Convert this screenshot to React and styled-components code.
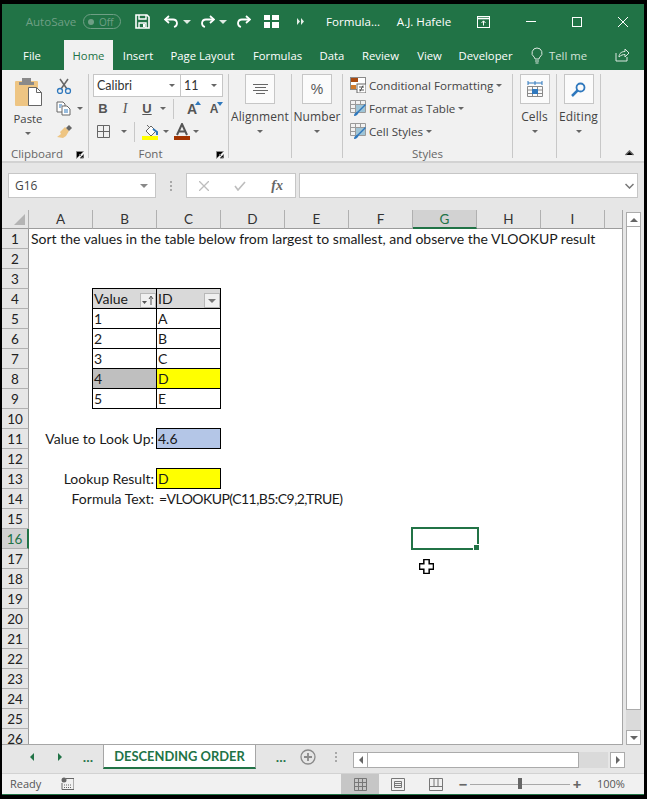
import React from "react";
import styled, { createGlobalStyle } from "styled-components";

const Global = createGlobalStyle`
  html, body { margin: 0; padding: 0; background: #000; }
  * { box-sizing: border-box; }
`;
const UI = `"Open Sans", "Noto Sans", sans-serif`;
const CAL = `Lato, "Open Sans", sans-serif`;
const GREEN = "#217346";

const Window = styled.div`
  width: 647px; height: 799px; background: #000;
  padding: 4px 3px 4px 2px; display: flex; flex-direction: column; overflow: hidden;
  font-family: ${UI};
`;
const Frame = styled.div`
  flex: 1; display: flex; flex-direction: column; background: #e6e6e6;
  min-height: 0; border-bottom: 1px solid ${GREEN};
`;
const TitleBar = styled.div`
  height: 36px; background: ${GREEN}; display: flex; align-items: center; color: #fff; font-size: 11.5px;
  flex: none; padding-bottom: 1px;
`;
const Slot = styled.div`
  flex: none; display: flex; align-items: center; justify-content: center;
  width: ${p => p.$w}px; height: 20px; margin-left: ${p => p.$ml || 0}px;
  color: ${p => p.$color || "#fff"};
  font-size: 11.6px; white-space: nowrap; gap: 1px;
`;
const Toggle = styled.div`
  width: 38px; height: 15px; border: 1px solid #6f9f85; border-radius: 8px; margin-left: 7px;
  display: flex; align-items: center; color: #6f9f85; font-size: 10px; padding-left: 4px; gap: 5px; flex: none;
`;
const Knob = styled.span`width: 6px; height: 6px; border-radius: 50%; background: #6f9f85;`;
const TabRow = styled.div`
  height: 30px; background: ${GREEN}; display: flex; align-items: stretch; color: #fff; flex: none; font-size: 11.3px;
`;
const Tab = styled.div`
  flex: none; width: ${p => p.$w}px; margin-left: ${p => p.$ml || 0}px; display: flex; align-items: center; justify-content: center;
  white-space: nowrap;
  background: ${p => (p.$active ? "#f1f1f1" : "transparent")};
  color: ${p => (p.$active ? GREEN : p.$dim ? "#d4e3da" : "#fff")};
`;
const Ribbon = styled.div`
  height: 93px; background: #f1f1f1; border-bottom: 2px solid #d2d2d2; display: flex; flex: none; padding-top: 4px; position: relative;
`;
const Group = styled.div`
  width: ${p => p.$w}px; flex: none; height: 84px; position: relative; display: flex; flex-direction: column;
  border-right: 1px solid #c8c8c8;
`;
const GroupBody = styled.div`
  flex: none; height: 74px; display: flex;
  flex-direction: ${p => (p.$col ? "column" : "row")};
`;
const GroupLabel = styled.div`
  height: 14px; flex: none; text-align: center; font-size: 11.5px; color: #666; line-height: 12px;
  padding-right: ${p => p.$pr || 0}px;
`;
const Launcher = styled.svg`position: absolute; right: 4px; bottom: -1px;`;
const PasteCol = styled.div`
  width: 48px; margin-left: 2px; display: flex; flex-direction: column; align-items: center; font-size: 11.3px; color: #444; padding-top: 3px;
`;
const PasteLabel = styled.div`margin-top: 3px; line-height: 16px;`;
const ClipTools = styled.div`display: flex; flex-direction: column; gap: 6px; padding: 3px 0 0 4px;`;
const ToolRow = styled.div`display: flex; align-items: center; gap: 5px; height: 17px;`;
const Caret = styled.span`
  display: inline-block; width: 0; height: 0; flex: none;
  border-left: 3px solid transparent; border-right: 3px solid transparent;
  border-top: 3px solid ${p => p.$c || "#666"};
  margin-left: ${p => p.$ml || 0}px;
`;
const Combo = styled.div`
  width: ${p => p.$w}px; height: 23px; background: #fff; border: 1px solid #c6c6c6; margin-left: ${p => p.$ml || 0}px;
  display: flex; align-items: center; justify-content: space-between; padding: 0 5px 0 3px;
  font-family: ${CAL}; font-size: 12.5px; color: #333; flex: none;
`;
const FontRow = styled.div`
  display: flex; align-items: center; padding-left: ${p => p.$pl || 0}px; height: 23px;
  font-size: 14px; color: #555; flex: none;
`;
const Fmt = styled.span`
  width: ${p => p.$w || 22}px; text-align: center; font-family: ${p => (p.$serif ? `"Liberation Serif", serif` : `"Liberation Sans", sans-serif`)};
  font-weight: ${p => (p.$b ? 700 : 400)}; font-style: ${p => (p.$i ? "italic" : "normal")};
  text-decoration: ${p => (p.$u ? "underline" : "none")}; flex: none; font-size: ${p => p.$fs || 13}px; position: relative;
`;
const Sep = styled.span`width: 1px; height: 20px; background: #c8c8c8; margin: 0 ${p => p.$m || 8}px; flex: none;`;
const Gap = styled.span`width: ${p => p.$w}px; flex: none;`;
const BigCol = styled.div`
  flex: 1; display: flex; flex-direction: column; align-items: center; font-size: 12px; color: #444;
`;
const BigBtn = styled.div`
  width: 30px; height: 30px; background: #fbfbfb; border: 1px solid #c6c6c6; display: flex; align-items: center; justify-content: center;
  font-size: 14px; color: #555; font-family: "Liberation Sans", sans-serif; margin-bottom: 4px; flex: none;
`;
const BigLabel = styled.div`line-height: 17px; white-space: nowrap; letter-spacing: 0.1px;`;
const CaretBox = styled.div`height: 13px; display: flex; align-items: center;`;
const StyleRow = styled.div`
  display: flex; align-items: center; height: 23px; padding: 0 0 1px 7px; gap: 3px; font-size: 11.6px; color: #444; white-space: nowrap; flex: none;
`;
const Collapse = styled.svg`position: absolute; right: 10px; bottom: 5px;`;

const FormulaBar = styled.div`
  height: 47px; flex: none; display: flex; align-items: flex-start; padding: 10px 6px 0 6px; background: #e6e6e6;
`;
const NameBox = styled.div`
  width: 148px; height: 25px; background: #fff; border: 1px solid #c6c6c6; display: flex; align-items: center;
  justify-content: space-between; padding: 0 7px 0 6px; font-size: 12px; color: #444; flex: none;
`;
const Dots = styled.div`
  width: ${p => p.$w || 30}px; height: ${p => p.$h || 25}px; margin-left: ${p => p.$ml || 0}px;
  display: flex; flex-direction: column; gap: 2px; align-items: center; justify-content: center; flex: none;
`;
const Dot = styled.span`width: 2px; height: 2px; background: #a8a8a8;`;
const FxBox = styled.div`
  width: 110px; height: 25px; background: #fff; border: 1px solid #c6c6c6; display: flex; align-items: center;
  justify-content: space-between; padding: 0 12px; flex: none; color: #777;
`;
const Fx = styled.span`font-family: "Liberation Serif", serif; font-style: italic; font-size: 14px; font-weight: 700; color: #666;`;
const Input = styled.div`
  flex: 1; height: 25px; margin-left: 3px; background: #fff; border: 1px solid #c6c6c6; display: flex; align-items: center;
  justify-content: flex-end; padding-right: 3px;
`;

const SheetArea = styled.div`
  height: 535px; flex: none; display: flex; background: #e6e6e6;
`;
const Sheet = styled.div`
  width: 621px; height: 535px; flex: none; overflow: hidden; background: #fff;
  display: grid; grid-template-columns: 27px repeat(9, 64px) 18px; grid-template-rows: 19px repeat(26, 20px);
  border-right: 1px solid #a6a6a6; border-bottom: 1px solid #a6a6a6; position: relative;
  font-family: ${CAL};
`;
const Corner = styled.div`
  grid-row: 1; grid-column: 1; background: #e6e6e6; border-right: 1px solid #b0b0b0; border-bottom: 1px solid #9c9c9c;
  display: flex; align-items: flex-end; justify-content: flex-end; padding: 0 3px 3px 0;
`;
const ColHead = styled.div`
  grid-row: 1; grid-column: ${p => p.$i + 2}; background: ${p => (p.$sel ? "#d2d2d2" : "#e6e6e6")};
  border-right: 1px solid #b0b0b0; border-bottom: ${p => (p.$sel ? `2px solid ${GREEN}` : "1px solid #9c9c9c")};
  color: ${p => (p.$sel ? GREEN : "#333")}; font-size: 13.5px; display: flex; align-items: center; justify-content: center;
`;
const RowHead = styled.div`
  grid-column: 1; grid-row: ${p => p.$r + 1}; background: ${p => (p.$sel ? "#d2d2d2" : "#e6e6e6")};
  border-right: ${p => (p.$sel ? `2px solid ${GREEN}` : "1px solid #9c9c9c")}; border-bottom: 1px solid #b0b0b0;
  color: ${p => (p.$sel ? GREEN : "#222")}; font-size: 13.5px; display: flex; align-items: center; justify-content: center;
`;
const Cell = styled.div`
  grid-row: ${p => p.$r + 1}; grid-column: ${p => p.$c + 1};
  background: ${p => p.$bg || "transparent"};
  border: ${p => (p.$box ? "1px solid #000" : "none")};
  margin: ${p => (p.$box ? "-1px 0 0 -1px" : "0")};
  padding: ${p => (p.$box ? "0 0 0 1px" : p.$right ? "0 3px 2px 0" : "0 0 2px 2px")};
  display: flex; align-items: center; justify-content: ${p => (p.$right ? "flex-end" : "space-between")};
  font-size: 14px; letter-spacing: ${p => p.$ls || 0}px; color: #1a1a1a; white-space: nowrap; position: relative; min-width: 0;
`;
const FilterBtn = styled.span`
  width: 16px; height: 15px; background: #f0f0f0; border: 1px solid #b8b8b8; flex: none; display: flex; align-items: center; justify-content: center; gap: 1px;
  margin-left: auto; align-self: flex-end;
`;
const Selection = styled.div`
  position: absolute; inset: -2px -2px -1px -2px; border: 2px solid ${GREEN};
`;
const Handle = styled.div`
  position: absolute; right: -2px; bottom: -2px; width: 5px; height: 5px; background: ${GREEN}; box-shadow: 0 0 0 1px #fff;
`;
const Pointer = styled.svg`position: absolute; left: 417px; top: 349px;`;

const VScroll = styled.div`
  flex: 1; padding: 2px 3px 0 3px; display: flex; flex-direction: column; background: #e6e6e6;
`;
const ScrollBtn = styled.div`
  width: 15px; height: ${p => p.$h || 15}px; margin-left: ${p => p.$ml || 0}px; background: #fff; border: 1px solid #ababab; display: flex; align-items: center; justify-content: center; flex: none;
`;
const VThumb = styled.div`height: ${p => p.$h}px; background: #fff; border: 1px solid #ababab; flex: none; margin-top: -1px;`;
const VTrack = styled.div`flex: 1; background: #dadada; min-height: 0;`;

const TabBar = styled.div`
  height: 28px; flex: none; display: flex; background: #e6e6e6; align-items: flex-start; color: ${GREEN}; border-top: 1px solid transparent;
`;
const SheetTab = styled.div`
  width: 153px; height: 24px; margin-top: -1px; margin-left: ${p => p.$ml}px; background: #fff; border-left: 1px solid #a6a6a6; border-right: 1px solid #a6a6a6;
  border-bottom: 2px solid ${GREEN}; color: ${GREEN}; font-size: 12.9px; font-weight: 700; font-family: ${CAL};
  display: flex; align-items: center; justify-content: center; white-space: nowrap; flex: none;
`;
const NavSlot = styled.div`
  width: ${p => p.$w}px; height: 22px; margin-left: ${p => p.$ml || 0}px; display: flex; align-items: center; justify-content: center; flex: none;
  font-weight: 700; font-size: 12px; font-family: ${UI};
`;
const HScroll = styled.div`
  margin-left: ${p => p.$ml}px; margin-top: 6px; display: flex; width: 272px; height: 16px; flex: none;
`;
const HThumb = styled.div`width: 212px; background: #fff; border: 1px solid #ababab; flex: none; margin-left: -1px;`;
const HTrack = styled.div`flex: 1; background: #dadada;`;
const Status = styled.div`
  flex: 1; background: #f1f1f1; border-top: 1px solid #d2d2d2; display: flex; align-items: stretch; font-size: 11px; color: #555;
`;
const StatusText = styled.div`margin-left: ${p => p.$ml}px; padding-bottom: 1px; display: flex; align-items: center; flex: none; width: ${p => p.$w}px;`;
const ViewBtn = styled.div`
  width: 38px; margin-left: ${p => p.$ml || 0}px; flex: none; display: flex; align-items: center; justify-content: center; background: ${p => (p.$on ? "#c6c6c6" : "transparent")};
`;
const Slider = styled.div`width: 100px; height: 100%; flex: none; display: flex; align-items: center; position: relative;`;
const SliderLine = styled.div`height: 1px; width: 100%; background: #a8a8a8;`;
const SliderThumb = styled.div`position: absolute; left: 48px; top: 4px; width: 4px; height: 11px; background: #666;`;
const Zoom = styled.div`width: 14px; flex: none; display: flex; align-items: center; justify-content: center; color: #666; font-weight: 700; font-size: 15px; margin-left: ${p => p.$ml || 0}px;`;

const S = ({ w, h, children, ...r }) => <svg width={w} height={h} viewBox={`0 0 ${w} ${h}`} fill="none" {...r}>{children}</svg>;

const Save = () => <S w={15} h={15}><path d="M1 1h11l2 2v11H1z" stroke="#fff" strokeWidth="1.6"/><path d="M4 1v4h7V1M4 14V9h7v5" stroke="#fff" strokeWidth="1.4"/><rect x="8" y="10" width="2" height="3" fill="#fff"/></S>;
const Undo = ({ flip }) => <S w={15} h={13} style={flip ? { transform: "scaleX(-1)" } : undefined}><path d="M5 1 1 4.5 5 8" stroke="#fff" strokeWidth="1.8"/><path d="M1.5 4.5H9a4 4 0 0 1 4 3.5c0 2-1 3.5-3 4" stroke="#fff" strokeWidth="1.8"/></S>;
const QuickTable = () => <S w={15} h={13}><path d="M0 0h6v5H0zM8 0h7v5H8zM0 7h6v6H0zM8 7h7v6H8z" fill="#fff"/></S>;
const More = () => <S w={8} h={7}><path d="M0 0v7l3-3.500zM4 0v7l3-3.500z" fill="#e6efe9"/></S>;
const Bulb = () => <S w={12} h={17}><path d="M6 1a5 5 0 0 0-3 9c.7.6 1 1.3 1 2h4c0-.7.3-1.4 1-2a5 5 0 0 0-3-9zM4 14h4M4.5 16h3" stroke="#dbe8e0" strokeWidth="1"/></S>;
const Share = () => <S w={15} h={14}><path d="M1 5v8h11V9" stroke="#dbe8e0"/><path d="M4 9c0-4 3-5.500 6-5.500V1l4 4-4 4V6.500C8 6.500 6 7 4 9z" stroke="#dbe8e0"/></S>;
const RibbonOpts = () => <S w={13} h={12}><rect x=".5" y=".5" width="12" height="11" stroke="#fff"/><path d="M0 2.500h13" stroke="#fff" strokeWidth="1.600"/><path d="M6.500 9.500V5M4.500 7l2-2.200 2 2.200" stroke="#fff"/></S>;
const Clipboard = () => <S w={29} h={31}><rect x="1" y="4" width="23" height="25" rx="1" fill="#eec583"/><rect x="8" y="1" width="9" height="6" fill="#8a8a8a"/><path d="M5 5h15v3H5z" fill="#8a8a8a"/><path d="M14.500 10.500h8l5 5v13h-13z" fill="#fff" stroke="#666"/><path d="M22.500 10.500v5h5" stroke="#666"/></S>;
const Scissors = () => <S w={16} h={16}><path d="M4 1l7 10M12 1 5 11" stroke="#666" strokeWidth="1.500"/><circle cx="4" cy="13" r="2.500" stroke="#2f78bd" strokeWidth="1.300"/><circle cx="12" cy="13" r="2.500" stroke="#2f78bd" strokeWidth="1.300"/></S>;
const CopyI = () => <S w={16} h={15}><path d="M1 1h6l2 2v8H1z" fill="#fff" stroke="#666"/><path d="M6 5h5l3 3v6H6z" fill="#fff" stroke="#666"/><path d="M3 4h3M3 6h2M8 9h4M8 11h4" stroke="#2f78bd"/></S>;
const Brush = () => <S w={17} h={15}><path d="M9 3l4 4-3 5-3 2-6-1 4-3-1-2z" fill="#eec583"/><path d="M10 4l3-3 3 3-3 3z" fill="#666"/></S>;
const Launch = () => <><path d="M.5 7.500v-7h7" stroke="#8a8a8a"/><path d="M3 3l4 4M4 7h3.500V3.500" stroke="#666"/></>;
const Borders = () => <S w={13} h={13}><path d="M.5.500h12v12H.500zM6.500.500v12M.500 6.500h12" stroke="#666"/></S>;
const Fill = () => <S w={17} h={16}><path d="M4 7l5-5 5 5-5 5z" fill="#fff" stroke="#666"/><path d="M5 1l3 3" stroke="#666"/><path d="M11 5l4 3v3" stroke="#2f78bd" strokeWidth="2"/><rect x="0" y="12" width="16" height="4" fill="#ffff00"/></S>;
const FontColor = () => <S w={16} h={17}><path d="M3 12 8 1l5 11M5 8.500h6" stroke="#555" strokeWidth="2"/><rect y="13" width="16" height="4" fill="#a33300"/></S>;
const Grow = ({ up, size }) => (
  <Fmt $w={22} $fs={size} $b>
    A
    <svg width="6" height="4" viewBox="0 0 6 4" style={{ position: "absolute", top: 0, right: 2 }}>
      <path d={up ? "M0 4 3 0l3 4z" : "M0 0h6L3 4z"} fill="#2f78bd"/>
    </svg>
  </Fmt>
);
const Align = () => <S w={15} h={11}><path d="M0 .500h15M2 3.500h11M0 6.500h15M3 9.500h9" stroke="#666"/></S>;
const CondIcon = () => <S w={16} h={16}><rect x=".5" y=".5" width="15" height="12" fill="#fff" stroke="#8a8a8a"/><rect x="1" y="1" width="7" height="4" fill="#a84a10"/><rect x="1" y="8" width="5" height="4" fill="#d07a2b"/><rect x="7" y="7" width="9" height="9" fill="#fff" stroke="#666"/><path d="M9 10h5M9 13h5M13 8.500 10 14.500" stroke="#555"/></S>;
const TblIcon = () => <S w={16} h={16}><path d="M.5.500h15v12H.500zM.500 4.500h15M.500 8.500h15M5.500.500v12M10.500.500v12" stroke="#9a9a9a"/><path d="M6 5h9v7H6z" fill="#9fc4d6"/><path d="M4 16c0-3 3-4 4-5l7-7 1 1-7 7c-1 2-2 4-5 4z" fill="#2f78bd"/></S>;
const CellsI = () => <S w={16} h={17}><path d="M1 2h14M1 0v4M15 0v4M8 0v4" stroke="#2f78bd"/><path d="M.5 5.500h15v10H.500zM.500 9h15M.500 12.500h15M5.500 5.500v10M10.500 5.500v10" stroke="#8a8a8a"/><rect x="5" y="8" width="6" height="5" fill="#2f78bd"/></S>;
const Search = () => <S w={15} h={15}><circle cx="9.500" cy="5.500" r="4" stroke="#2f78bd" strokeWidth="1.800"/><path d="M6.500 8.500 1 14" stroke="#2f78bd" strokeWidth="2.500"/></S>;
const Tri = ({ dir, c = "#666" }) => {
  const d = { l: "M4 0v8L0 4z", r: "M0 0v8l4-4z", u: "M0 4h8L4 0z", d: "M0 0h8L4 4z" }[dir];
  const h = dir === "l" || dir === "r";
  return <svg width={h ? 4 : 8} height={h ? 8 : 4} viewBox={h ? "0 0 4 8" : "0 0 8 4"}><path d={d} fill={c}/></svg>;
};
const SortFilter = () => <S w={12} h={11}><path d="M0 6h5L2.500 9z" fill="#555"/><path d="M9 10V2M7 4l2-3 2 3" stroke="#555"/></S>;

const ROWS = Array.from({ length: 26 }, (_, i) => i + 1);
const COLS = ["A", "B", "C", "D", "E", "F", "G", "H", "I", ""];
const TABLE = [["1", "A"], ["2", "B"], ["3", "C"], ["4", "D"], ["5", "E"]];

export default function App() {
  return (
    <Window>
      <Global />
      <Frame>
        <TitleBar>
          <Slot $w={50} $ml={24} $color="#6f9f85">AutoSave</Slot>
          <Toggle><Knob />Off</Toggle>
          <Slot $w={15} $ml={14}><Save /></Slot>
          <Slot $w={15} $ml={14}><Undo /></Slot>
          <Slot $w={8} $ml={4}><Tri dir="d" c="#dfeae3" /></Slot>
          <Slot $w={15} $ml={9}><Undo flip /></Slot>
          <Slot $w={8} $ml={4}><Tri dir="d" c="#dfeae3" /></Slot>
          <Slot $w={15} $ml={9}><Undo flip /></Slot>
          <Slot $w={15} $ml={13}><QuickTable /></Slot>
          <Slot $w={8} $ml={18}><More /></Slot>
          <Slot $w={54} $ml={21}>Formula...</Slot>
          <Slot $w={56} $ml={16}>A.J. Hafele</Slot>
          <Slot $w={13} $ml={25}><RibbonOpts /></Slot>
          <Slot $w={10} $ml={36}><S w={10} h={1}><path d="M0 .500h10" stroke="#fff"/></S></Slot>
          <Slot $w={10} $ml={36}><S w={10} h={10}><rect x=".5" y=".5" width="9" height="9" stroke="#fff"/></S></Slot>
          <Slot $w={10} $ml={36}><S w={10} h={10}><path d="M0 0l10 10M10 0 0 10" stroke="#fff"/></S></Slot>
        </TitleBar>
        <TabRow>
          <Tab $w={44} $ml={8}>File</Tab>
          <Tab $w={49} $ml={10} $active>Home</Tab>
          <Tab $w={30} $ml={10}>Insert</Tab>
          <Tab $w={65} $ml={17}>Page Layout</Tab>
          <Tab $w={49} $ml={18}>Formulas</Tab>
          <Tab $w={24} $ml={18}>Data</Tab>
          <Tab $w={37} $ml={18}>Review</Tab>
          <Tab $w={25} $ml={18}>View</Tab>
          <Tab $w={53} $ml={17}>Developer</Tab>
          <Tab $w={12} $ml={19}><Bulb /></Tab>
          <Tab $w={40} $ml={5} $dim>Tell me</Tab>
          <Tab $w={15} $ml={27}><Share /></Tab>
        </TabRow>
        <Ribbon>
          <Group $w={87}>
            <GroupBody>
              <PasteCol>
                <Clipboard />
                <PasteLabel>Paste</PasteLabel>
                <CaretBox><Caret /></CaretBox>
              </PasteCol>
              <ClipTools>
                <ToolRow><Scissors /></ToolRow>
                <ToolRow><CopyI /><Caret /></ToolRow>
                <ToolRow><Brush /></ToolRow>
              </ClipTools>
            </GroupBody>
            <GroupLabel $pr={16}>Clipboard</GroupLabel>
            <Launcher width="8" height="8"><Launch /></Launcher>
          </Group>
          <Group $w={140}>
            <GroupBody $col>
              <FontRow $pl={4}>
                <Combo $w={88}>Calibri<Caret /></Combo>
                <Combo $w={43} $ml={-1}>11<Caret /></Combo>
              </FontRow>
              <FontRow $pl={3}>
                <Fmt $b>B</Fmt><Fmt $i $serif $fs={14}>I</Fmt><Fmt $u $b>U</Fmt><Caret $ml={2}/>
                <Sep $m={7} />
                <Grow up size={14} /><Grow size={12} />
              </FontRow>
              <FontRow $pl={8}>
                <Borders /><Caret $ml={11} />
                <Sep $m={7} />
                <Fill /><Caret $ml={4} /><Gap $w={5} />
                <FontColor /><Caret $ml={3} />
              </FontRow>
            </GroupBody>
            <GroupLabel $pr={16}>Font</GroupLabel>
            <Launcher width="8" height="8"><Launch /></Launcher>
          </Group>
          <Group $w={63}>
            <GroupBody><BigCol><BigBtn><Align /></BigBtn><BigLabel>Alignment</BigLabel><CaretBox><Caret /></CaretBox></BigCol></GroupBody>
          </Group>
          <Group $w={51}>
            <GroupBody><BigCol><BigBtn>%</BigBtn><BigLabel>Number</BigLabel><CaretBox><Caret /></CaretBox></BigCol></GroupBody>
          </Group>
          <Group $w={170}>
            <GroupBody $col>
              <StyleRow><CondIcon />Conditional Formatting<Caret /></StyleRow>
              <StyleRow><TblIcon />Format as Table<Caret /></StyleRow>
              <StyleRow><TblIcon />Cell Styles<Caret /></StyleRow>
            </GroupBody>
            <GroupLabel>Styles</GroupLabel>
          </Group>
          <Group $w={44}>
            <GroupBody><BigCol><BigBtn><CellsI /></BigBtn><BigLabel>Cells</BigLabel><CaretBox><Caret /></CaretBox></BigCol></GroupBody>
          </Group>
          <Group $w={44}>
            <GroupBody><BigCol><BigBtn><Search /></BigBtn><BigLabel>Editing</BigLabel><CaretBox><Caret /></CaretBox></BigCol></GroupBody>
          </Group>
          <Collapse width="9" height="6" viewBox="0 0 9 6"><path d="M.5 5 4.500 1l4 4" stroke="#666" strokeWidth="1.500"/></Collapse>
        </Ribbon>
        <FormulaBar>
          <NameBox>G16<Tri dir="d" c="#888" /></NameBox>
          <Dots><Dot /><Dot /><Dot /></Dots>
          <FxBox>
            <S w={10} h={10}><path d="M0 0l10 10M10 0 0 10" stroke="#bdbdbd" strokeWidth="1.300"/></S>
            <S w={12} h={10}><path d="M1 5l3 4 7-8" stroke="#bdbdbd" strokeWidth="1.600"/></S>
            <Fx>fx</Fx>
          </FxBox>
          <Input><S w={9} h={6}><path d="M.5 1 4.500 5l4-4" stroke="#777" strokeWidth="1.500"/></S></Input>
        </FormulaBar>
        <SheetArea>
          <Sheet>
            <Corner><svg width="11" height="11" viewBox="0 0 11 11"><path d="M11 0v11H0z" fill="#b4b4b4"/></svg></Corner>
            {COLS.map((c, i) => <ColHead key={i} $i={i} $sel={c === "G"}>{c}</ColHead>)}
            {ROWS.map(r => <RowHead key={r} $r={r} $sel={r === 16}>{r}</RowHead>)}

            <Cell $r={1} $c={1}>Sort the values in the table below from largest to smallest, and observe the VLOOKUP result</Cell>

            <Cell $r={4} $c={2} $box $bg="#d9d9d9">Value<FilterBtn><SortFilter /></FilterBtn></Cell>
            <Cell $r={4} $c={3} $box $bg="#d9d9d9">ID<FilterBtn><Tri dir="d" c="#777" /></FilterBtn></Cell>
            {TABLE.map(([v, id], i) => (
              <React.Fragment key={v}>
                <Cell $r={5 + i} $c={2} $box $bg={v === "4" ? "#bfbfbf" : undefined}>{v}</Cell>
                <Cell $r={5 + i} $c={3} $box $bg={v === "4" ? "#ffff00" : undefined}>{id}</Cell>
              </React.Fragment>
            ))}

            <Cell $r={11} $c={2} $right>Value to Look Up:</Cell>
            <Cell $r={11} $c={3} $box $bg="#b4c6e7">4.6</Cell>
            <Cell $r={13} $c={2} $right>Lookup Result:</Cell>
            <Cell $r={13} $c={3} $box $bg="#ffff00">D</Cell>
            <Cell $r={14} $c={2} $right>Formula Text:</Cell>
            <Cell $r={14} $c={3} $ls={-0.55}>=VLOOKUP(C11,B5:C9,2,TRUE)</Cell>

            <Cell $r={16} $c={7}><Selection><Handle /></Selection></Cell>

            <Pointer width="15" height="15" viewBox="0 0 14 14"><path d="M4.500.500h5v4h4v5h-4v4h-5v-4h-4v-5h4z" fill="#fff" stroke="#000" strokeWidth="1.400"/></Pointer>
          </Sheet>
          <VScroll>
            <ScrollBtn><Tri dir="u" /></ScrollBtn>
            <VThumb $h={484} />
            <VTrack />
            <ScrollBtn><Tri dir="d" /></ScrollBtn>
          </VScroll>
        </SheetArea>
        <TabBar>
          <NavSlot $w={12} $ml={24}><Tri dir="l" c={GREEN} /></NavSlot>
          <NavSlot $w={12} $ml={16}><Tri dir="r" c={GREEN} /></NavSlot>
          <NavSlot $w={14} $ml={15}>...</NavSlot>
          <SheetTab $ml={8}>DESCENDING ORDER</SheetTab>
          <NavSlot $w={14} $ml={18}>...</NavSlot>
          <NavSlot $w={16} $ml={12}>
            <S w={16} h={16}><circle cx="8" cy="8" r="7" stroke="#8a8a8a" strokeWidth="1.300"/><path d="M8 4v8M4 8h8" stroke="#8a8a8a" strokeWidth="1.800"/></S>
          </NavSlot>
          <Dots $w={12} $h={22} $ml={14}><Dot /><Dot /><Dot /></Dots>
          <HScroll $ml={11}>
            <ScrollBtn $h={16}><Tri dir="l" /></ScrollBtn>
            <HThumb />
            <HTrack />
            <ScrollBtn $h={16} $ml={2}><Tri dir="r" /></ScrollBtn>
          </HScroll>
        </TabBar>
        <Status>
          <StatusText $ml={8} $w={40}>Ready</StatusText>
          <StatusText $ml={11} $w={14}>
            <S w={13} h={13}><circle cx="3" cy="3" r="2.500" fill="#666"/><path d="M5 1.500h8v11H1V6" stroke="#666"/><path d="M3 8h8M3 10.500h8" stroke="#666" strokeDasharray="1 1"/></S>
          </StatusText>
          <ViewBtn $ml={266} $on>
            <S w={13} h={13}><path d="M.5.500h12v12H.500zM.500 4.500h12M.500 8.500h12M4.500.500v12M8.500.500v12" stroke="#777"/></S>
          </ViewBtn>
          <ViewBtn><S w={14} h={13}><path d="M.5.500h13v12H.500z" stroke="#777"/><path d="M3.500 3.500h7v6h-7zM4 5.500h6M4 7.500h6" stroke="#777"/></S></ViewBtn>
          <ViewBtn><S w={14} h={13}><path d="M.5.500h13v12H.500zM.500 8.500h13M5 .500v8M9 .500v8" stroke="#777"/></S></ViewBtn>
          <Zoom $ml={1}>−</Zoom>
          <Slider><SliderLine /><SliderThumb /></Slider>
          <Zoom>+</Zoom>
          <StatusText $ml={13} $w={30}>100%</StatusText>
        </Status>
      </Frame>
    </Window>
  );
}
